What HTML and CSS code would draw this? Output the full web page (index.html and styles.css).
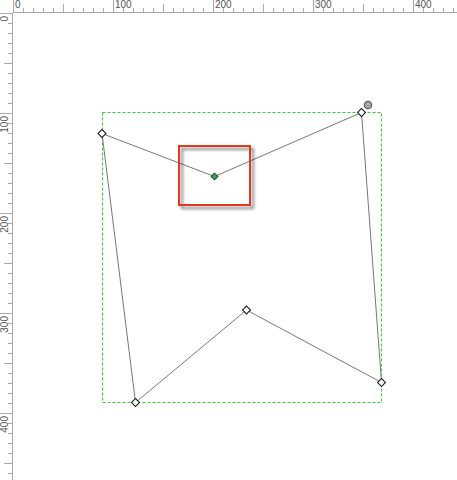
FILE: index.html
```html
<!DOCTYPE html>
<html lang="en">
<head>
    <meta charset="UTF-8">
    <title>Shape editor</title>
    <link rel="stylesheet" href="styles.css">
</head>
<body>

<div class="editor">
    <div class="corner"></div>

    <!-- Top ruler -->
    <svg class="ruler-top" width="444" height="13" id="rulerTop"></svg>

    <!-- Left ruler -->
    <svg class="ruler-left" width="13" height="467" id="rulerLeft"></svg>

    <!-- Drawing canvas -->
    <svg class="canvas" width="444" height="467">
        <defs>
            <filter id="shadow" x="-20%" y="-20%" width="150%" height="150%">
                <feDropShadow dx="3" dy="3" stdDeviation="1.5" flood-color="#000" flood-opacity="0.5"/>
            </filter>
        </defs>

        <rect class="bbox" x="89.5" y="99.5" width="279" height="290"/>

        <polygon class="shape" points="89,120.5 201.5,163.5 348.5,99.5 368.5,369.5 233.5,297 122.5,389.5"/>

        <rect class="selection" x="166" y="133" width="71" height="59" filter="url(#shadow)"/>

        <g class="handles">
            <rect x="-2.8" y="-2.8" width="5.6" height="5.6" transform="translate(89 120.5) rotate(45)"/>
            <rect x="-2.8" y="-2.8" width="5.6" height="5.6" transform="translate(348.5 99.5) rotate(45)"/>
            <rect x="-2.8" y="-2.8" width="5.6" height="5.6" transform="translate(368.5 369.5) rotate(45)"/>
            <rect x="-2.8" y="-2.8" width="5.6" height="5.6" transform="translate(233.5 297) rotate(45)"/>
            <rect x="-2.8" y="-2.8" width="5.6" height="5.6" transform="translate(122.5 389.5) rotate(45)"/>
            <rect class="active" x="-2.4" y="-2.4" width="4.8" height="4.8" transform="translate(201.5 163.5) rotate(45)"/>
        </g>

        <circle class="rotate-knob" cx="355" cy="92" r="3.8"/>
    </svg>
</div>

<script>
    var NS = "http://www.w3.org/2000/svg";

    function el(parent, name, attrs, text) {
        var node = document.createElementNS(NS, name);
        for (var k in attrs) node.setAttribute(k, attrs[k]);
        if (text !== undefined) node.textContent = text;
        parent.appendChild(node);
        return node;
    }

    // Top ruler ticks and labels
    var rulerTop = document.getElementById("rulerTop");
    el(rulerTop, "line", { x1: 0, y1: 12.5, x2: 444, y2: 12.5, "class": "edge" });
    for (var x = 0; x <= 440; x += 10) {
        var len = x % 100 === 0 ? 12 : (x % 50 === 0 ? 8 : 4);
        el(rulerTop, "line", { x1: x + 0.5, y1: 12 - len, x2: x + 0.5, y2: 12, "class": "tick" });
        if (x % 100 === 0) el(rulerTop, "text", { x: x + 2, y: 8 }, x);
    }

    // Left ruler ticks and labels
    var rulerLeft = document.getElementById("rulerLeft");
    el(rulerLeft, "line", { x1: 12.5, y1: 0, x2: 12.5, y2: 467, "class": "edge" });
    for (var y = 0; y <= 460; y += 10) {
        var l = y % 100 === 0 ? 12 : (y % 50 === 0 ? 8 : 4);
        el(rulerLeft, "line", { x1: 12 - l, y1: y + 0.5, x2: 12, y2: y + 0.5, "class": "tick" });
        if (y % 100 === 0) {
            el(rulerLeft, "text", { x: 0, y: 0, "text-anchor": "end",
                transform: "translate(8 " + (y + 3) + ") rotate(-90)" }, y);
        }
    }
</script>

</body>
</html>
```

FILE: styles.css
```css
body {
    margin: 0;
    background: #fff;
    font-family: 'Liberation Sans', Arial, sans-serif;
    overflow: hidden;
}

.editor {
    display: grid;
    grid-template-columns: 13px 444px;
    grid-template-rows: 13px 467px;
}

.editor svg {
    display: block;
}

.ruler-top text,
.ruler-left text {
    font-size: 10px;
    fill: #555;
}

.tick {
    stroke: #a8a8a8;
    stroke-width: 1;
}

.edge {
    stroke: #a8a8a8;
    stroke-width: 1;
}

.bbox {
    fill: none;
    stroke: #2ed12e;
    stroke-width: 1;
    stroke-dasharray: 3 2;
}

.shape {
    fill: none;
    stroke: #777;
    stroke-width: 1;
}

.selection {
    fill: none;
    stroke: #e5381d;
    stroke-width: 2;
}

.handles rect {
    fill: #fff;
    stroke: #111;
    stroke-width: 1;
}

.handles rect.active {
    fill: #3f9f5c;
    stroke: #1b4d2a;
}

.rotate-knob {
    fill: #a9a9a9;
    stroke: #4a4a4a;
    stroke-width: 1;
}
```
